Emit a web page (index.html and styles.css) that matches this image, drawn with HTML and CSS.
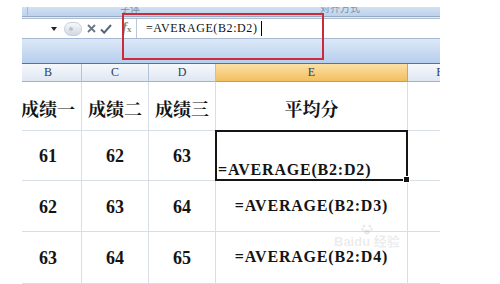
FILE: index.html
```html
<!DOCTYPE html>
<html lang="zh-CN">
<head>
  <meta charset="UTF-8">
  <meta name="viewport" content="width=device-width, initial-scale=1">
  <title>AVERAGE 求平均分</title>
  <link rel="stylesheet" href="styles.css">
</head>
<body>

  <div class="frame">
    <!-- 功能区底部 -->
    <div class="ribbon">
      <span class="sep"></span>
      <span class="group-label lbl-font">字体</span>
      <span class="group-label lbl-align">对齐方式</span>
    </div>
    <div class="ribbon-edge"></div>

    <!-- 编辑栏 -->
    <div class="formula-bar">
      <div class="name-box">
        <svg width="6" height="4" viewBox="0 0 6 4"><path d="M0 0h6L3 4z" fill="#222"/></svg>
      </div>
      <span class="pill"><span class="pill-dot"></span></span>
      <svg class="icon-x" width="9" height="9" viewBox="0 0 9 9">
        <path d="M1 1l7 7M8 1L1 8" stroke="#6d7783" stroke-width="1.8" fill="none"/>
      </svg>
      <svg class="icon-ok" width="12" height="10" viewBox="0 0 12 10">
        <path d="M1 5.5l3.2 3.2L11 1" stroke="#56657b" stroke-width="2" fill="none"/>
      </svg>
      <span class="fx"><i>f</i><small>x</small></span>
      <div class="input">=AVERAGE(B2:D2)<span class="caret"></span></div>
    </div>
    <div class="band"></div>

    <!-- 工作表 -->
    <div class="sheet">
      <div class="col-head">B</div>
      <div class="col-head">C</div>
      <div class="col-head">D</div>
      <div class="col-head active">E</div>
      <div class="col-head">F</div>

      <div class="cell zh">成绩一</div>
      <div class="cell zh">成绩二</div>
      <div class="cell zh">成绩三</div>
      <div class="cell zh">平均分</div>
      <div class="cell"></div>

      <div class="cell">61</div>
      <div class="cell">62</div>
      <div class="cell">63</div>
      <div class="cell formula editing">=AVERAGE(B2:D2)</div>
      <div class="cell"></div>

      <div class="cell">62</div>
      <div class="cell">63</div>
      <div class="cell">64</div>
      <div class="cell formula">=AVERAGE(B2:D3)</div>
      <div class="cell"></div>

      <div class="cell">63</div>
      <div class="cell">64</div>
      <div class="cell">65</div>
      <div class="cell formula">=AVERAGE(B2:D4)</div>
      <div class="cell"></div>
    </div>
  </div>

  <!-- 红色标注框 -->
  <div class="callout"></div>

  <!-- 水印 -->
  <div class="watermark">
    <svg width="12" height="12" viewBox="0 0 12 12">
      <circle cx="3" cy="3" r="1.6"/><circle cx="9" cy="3" r="1.6"/>
      <circle cx="1.5" cy="6.5" r="1.4"/><circle cx="10.5" cy="6.5" r="1.4"/>
      <ellipse cx="6" cy="9" rx="3" ry="2.4"/>
    </svg>
    <span class="wm-text">Baidu 经验</span>
  </div>

</body>
</html>
```

FILE: styles.css
```css
:root {
  --grid: #d8dee6;
  --head-border: #b3c3d8;
  --red: #cc2b39;
}

* {
  box-sizing: border-box;
  margin: 0;
  padding: 0;
}

body {
  width: 500px;
  height: 284px;
  overflow: hidden;
  position: relative;
  background: #fff;
  font-family: "Liberation Serif", "Noto Serif CJK SC", "Noto Sans CJK SC", serif;
  color: #141414;
}

.frame {
  margin: 7px 0 0 22px;
  width: 418px;
  height: 277px;
  overflow: hidden;
}

/* 功能区 */
.ribbon {
  height: 9px;
  display: flex;
  overflow: hidden;
  background: linear-gradient(#d2e1f3, #bdd2ec);
  font-family: "Noto Sans CJK SC", sans-serif;
  font-size: 10px;
  line-height: 10px;
  color: #7d8ea6;
}

.ribbon .sep {
  width: 1px;
  height: 8px;
  margin-left: 5px;
  background: #a7b8ce;
}

.group-label {
  margin-top: -4px;
  white-space: nowrap;
}

.lbl-font {
  margin-left: 92px;
}

.lbl-align {
  margin-left: 180px;
}

.ribbon-edge {
  height: 3px;
  background: #e3ebf5;
  border-top: 1px solid #97aac3;
  border-bottom: 1px solid #aebdd1;
}

/* 编辑栏 */
.formula-bar {
  height: 20px;
  display: flex;
  align-items: center;
  background: #fff;
  border-bottom: 1px solid #a5b9d3;
}

.name-box {
  width: 38px;
  display: flex;
  justify-content: flex-end;
  padding-right: 3px;
}

.pill {
  width: 18px;
  height: 14px;
  margin-left: 4px;
  border-radius: 7px;
  border: 1px solid #c6cfdb;
  background: linear-gradient(#f6f8fb, #d2d9e2);
  display: flex;
  align-items: center;
  padding-left: 4px;
}

.pill-dot {
  width: 4px;
  height: 4px;
  border-radius: 50%;
  background: #b9c3d0;
}

.icon-x {
  margin-left: 5px;
}

.icon-ok {
  margin-left: 4px;
}

.fx {
  margin-left: 10px;
  width: 13px;
  color: #8f8774;
  font-size: 15px;
  line-height: 15px;
  font-weight: bold;
}

.fx small {
  font-size: 9px;
}

.input {
  flex: 1;
  height: 19px;
  margin-left: 1px;
  padding-left: 9px;
  display: flex;
  align-items: center;
  border-left: 1px solid #b9c7d8;
  font-size: 12px;
  letter-spacing: 0.6px;
  color: #111;
}

.caret {
  width: 1px;
  height: 15px;
  margin-left: 3px;
  background: #000;
}

.band {
  height: 25px;
  background: linear-gradient(#dde8f7, #b6ceee);
  border-bottom: 1px solid #56739a;
}

/* 工作表 */
.sheet {
  margin-left: -7px;
  display: grid;
  grid-template-columns: 67px 67px 67px 192px 64px;
  grid-template-rows: 18px 49px 50px 51px 52px;
}

.col-head {
  display: flex;
  align-items: center;
  justify-content: center;
  border-right: 1px solid var(--head-border);
  border-bottom: 1px solid #9fb3cc;
  background: linear-gradient(#f6f8fc, #dfe7f2);
  font-size: 12px;
  color: #2f3f58;
}

.col-head.active {
  background: linear-gradient(#fbe0a6, #f2bf5f);
  border-right-color: #d7a552;
  border-bottom-color: #c99b4a;
}

.cell {
  display: flex;
  align-items: center;
  justify-content: center;
  border-right: 1px solid var(--grid);
  border-bottom: 1px solid var(--grid);
  font-size: 18px;
  font-weight: bold;
  white-space: nowrap;
  padding-top: 2px;
}

.cell.zh {
  font-family: "Noto Serif CJK SC", "Noto Sans CJK SC", serif;
  padding-top: 3px;
}

.cell.formula {
  font-size: 16px;
  letter-spacing: 0.8px;
  padding: 0 0 1px;
}

.cell.editing {
  position: relative;
  justify-content: flex-start;
  align-items: flex-end;
  padding: 0 0 1px 2px;
}

.cell.editing::after {
  content: "";
  position: absolute;
  top: -1px;
  left: -1px;
  right: -1px;
  bottom: -1px;
  border: 2px solid #151515;
}

.cell.editing::before {
  content: "";
  position: absolute;
  right: -3px;
  bottom: -3px;
  width: 5px;
  height: 5px;
  background: #151515;
  border: 1px solid #fff;
  z-index: 1;
}

/* 红色标注框 */
.callout {
  position: absolute;
  left: 122px;
  top: 13px;
  width: 202px;
  height: 47px;
  border: 2px solid var(--red);
}

.watermark {
  position: absolute;
  left: 334px;
  top: 223px;
  display: flex;
  flex-direction: column;
  align-items: center;
  color: rgba(110, 110, 110, 0.14);
  fill: rgba(110, 110, 110, 0.14);
}

.wm-text {
  font-family: "Liberation Sans", "Noto Sans CJK SC", sans-serif;
  font-size: 13px;
  font-weight: bold;
  line-height: 14px;
}
```
